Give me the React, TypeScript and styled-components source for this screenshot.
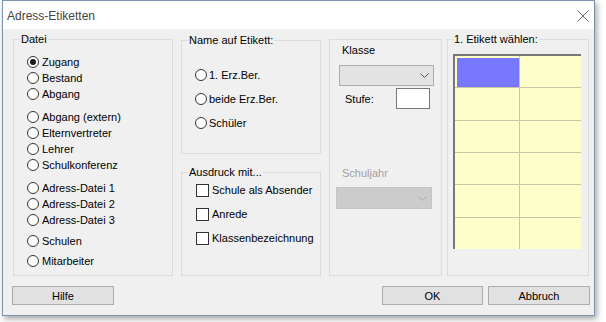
import React from "react";
import styled, { createGlobalStyle } from "styled-components";

const GlobalStyle = createGlobalStyle`
  html, body { margin: 0; padding: 0; background: #ffffff; }
  body {
    font-family: "Liberation Sans", Arial, sans-serif;
    font-size: 11px;
    color: #000;
  }
  * { box-sizing: border-box; }
`;

const Page = styled.div`
  padding: 0 0 0 2px;
  width: 606px;
  height: 322px;
  overflow: hidden;
`;

const Window = styled.div`
  width: 593px;
  border: 1px solid #7d93ad;
  box-shadow: 2px 3px 6px rgba(0, 0, 0, 0.35);
  background: #f0f0f0;
`;

const TitleBar = styled.div`
  height: 28px;
  background: #ffffff;
  display: flex;
  align-items: center;
  justify-content: space-between;
  padding: 0 5px 0 4px;
`;

const Title = styled.span`
  font-size: 12px;
  color: #444444;
  line-height: 14px;
  padding-top: 1px;
`;

const CloseBtn = styled.span`
  display: flex;
  width: 12px;
  height: 12px;
  margin-top: 1px;
`;

const Body = styled.div`
  padding: 10px 5px 10px 10px;
`;

const Columns = styled.div`
  display: flex;
  height: 237px;
`;

const Group = styled.div<{ $w: number; $h?: number; $ml?: number; $mt?: number }>`
  position: relative;
  width: ${(p) => p.$w}px;
  height: ${(p) => (p.$h ? `${p.$h}px` : "auto")};
  margin-left: ${(p) => p.$ml ?? 0}px;
  margin-top: ${(p) => p.$mt ?? 0}px;
  border: 1px solid #dcdcdc;
  flex-shrink: 0;
`;

const Legend = styled.span<{ $left: number }>`
  position: absolute;
  top: -8px;
  left: ${(p) => p.$left}px;
  padding: 0 1px;
  background: #f0f0f0;
  line-height: 14px;
  white-space: nowrap;
`;

const Column = styled.div<{ $w: number; $ml: number }>`
  display: flex;
  flex-direction: column;
  width: ${(p) => p.$w}px;
  margin-left: ${(p) => p.$ml}px;
  flex-shrink: 0;
`;

const OptionList = styled.div<{ $pt: number; $pl: number }>`
  display: flex;
  flex-direction: column;
  padding-top: ${(p) => p.$pt}px;
  padding-left: ${(p) => p.$pl}px;
`;

const OptionRow = styled.label<{ $h: number; $mt?: number; $gap: number }>`
  display: flex;
  align-items: center;
  height: ${(p) => p.$h}px;
  margin-top: ${(p) => p.$mt ?? 0}px;
  gap: ${(p) => p.$gap}px;
  white-space: nowrap;
  line-height: 14px;
`;

const RadioCircle = styled.span<{ $checked?: boolean }>`
  display: flex;
  align-items: center;
  justify-content: center;
  width: 12px;
  height: 12px;
  border: 1px solid #333333;
  border-radius: 50%;
  background: #ffffff;
  flex-shrink: 0;
  &::after {
    content: "";
    display: ${(p) => (p.$checked ? "block" : "none")};
    width: 6px;
    height: 6px;
    border-radius: 50%;
    background: #1a1a1a;
  }
`;

const CheckSquare = styled.span`
  width: 13px;
  height: 13px;
  border: 1px solid #333333;
  background: #ffffff;
  flex-shrink: 0;
`;

const Panel = styled.div`
  width: 113px;
  margin-left: 8px;
  border: 1px solid #dcdcdc;
  padding: 3px 0 0 9px;
  flex-shrink: 0;
  display: flex;
  flex-direction: column;
`;

const FieldLabel = styled.span<{ $disabled?: boolean; $mt?: number }>`
  margin-left: 3px;
  margin-top: ${(p) => p.$mt ?? 0}px;
  line-height: 14px;
  color: ${(p) => (p.$disabled ? "#a0a0a0" : "#000")};
`;

const Select = styled.div<{ $disabled?: boolean; $w: number; $h: number; $mt: number; $ml?: number }>`
  display: flex;
  align-items: center;
  justify-content: flex-end;
  width: ${(p) => p.$w}px;
  height: ${(p) => p.$h}px;
  margin-top: ${(p) => p.$mt}px;
  margin-left: ${(p) => p.$ml ?? 0}px;
  padding-right: 4px;
  background: ${(p) => (p.$disabled ? "#cccccc" : "#e3e3e3")};
  border: 1px solid ${(p) => (p.$disabled ? "#c4c4c4" : "#adadad")};
`;

const StufeRow = styled.div`
  display: flex;
  align-items: center;
  height: 21px;
  margin-top: 2px;
  padding-left: 6px;
`;

const StufeLabel = styled.span`
  width: 51px;
  line-height: 14px;
`;

const TextInput = styled.div`
  width: 34px;
  height: 21px;
  background: #ffffff;
  border: 1px solid #7a7a7a;
`;

const LabelGrid = styled.div`
  display: grid;
  grid-template-columns: 64px 61px;
  grid-template-rows: repeat(6, 1fr);
  gap: 1px;
  width: 128px;
  height: 195px;
  margin: 14px 0 0 5px;
  background: #cac6a6;
  border-left: 2px solid #787878;
  border-top: 2px solid #787878;
`;

const LabelCell = styled.div<{ $selected?: boolean }>`
  background: ${(p) => (p.$selected ? "#7878ff" : "#ffffcc")};
  border-left: ${(p) => (p.$selected ? "2px solid #ffffcc" : "none")};
  border-top: ${(p) => (p.$selected ? "2px solid #ffffcc" : "none")};
`;

const Footer = styled.div`
  display: flex;
  align-items: center;
  margin: 10px -1px 0 -1px;
`;

const Button = styled.button<{ $w: number; $ml?: number }>`
  width: ${(p) => p.$w}px;
  height: 19px;
  margin-left: ${(p) => p.$ml ?? 0}px;
  padding: 0;
  background: #e1e1e1;
  border: 1px solid #adadad;
  font-family: "Liberation Sans", Arial, sans-serif;
  font-size: 11px;
  color: #000;
  line-height: 14px;
`;

const Spacer = styled.div`
  flex: 1;
`;

const Chevron = ({ color }: { color: string }) => (
  <svg width="9" height="5" viewBox="0 0 9 5">
    <polyline points="0.5,0.5 4.5,4.5 8.5,0.5" fill="none" stroke={color} strokeWidth="1" />
  </svg>
);

type Opt = { label: string; mt?: number; checked?: boolean };

const dateiOptions: Opt[] = [
  { label: "Zugang", checked: true },
  { label: "Bestand" },
  { label: "Abgang" },
  { label: "Abgang (extern)", mt: 7 },
  { label: "Elternvertreter" },
  { label: "Lehrer" },
  { label: "Schulkonferenz" },
  { label: "Adress-Datei 1", mt: 7 },
  { label: "Adress-Datei 2" },
  { label: "Adress-Datei 3" },
  { label: "Schulen", mt: 5 },
  { label: "Mitarbeiter", mt: 4 },
];

const nameOptions = ["1. Erz.Ber.", "beide Erz.Ber.", "Schüler"];
const ausdruckOptions = ["Schule als Absender", "Anrede", "Klassenbezeichnung"];

export default function App() {
  const cells = Array.from({ length: 12 }, (_, i) => i);
  return (
    <Page>
      <GlobalStyle />
      <Window>
        <TitleBar>
          <Title>Adress-Etiketten</Title>
          <CloseBtn>
            <svg width="12" height="12" viewBox="0 0 12 12">
              <line x1="0.5" y1="0.5" x2="11.5" y2="11.5" stroke="#666" strokeWidth="1" />
              <line x1="11.5" y1="0.5" x2="0.5" y2="11.5" stroke="#666" strokeWidth="1" />
            </svg>
          </CloseBtn>
        </TitleBar>
        <Body>
          <Columns>
            <Group $w={160}>
              <Legend $left={6}>Datei</Legend>
              <OptionList $pt={14} $pl={13}>
                {dateiOptions.map((o) => (
                  <OptionRow key={o.label} $h={16} $mt={o.mt} $gap={3}>
                    <RadioCircle $checked={o.checked} />
                    <span>{o.label}</span>
                  </OptionRow>
                ))}
              </OptionList>
            </Group>

            <Column $w={140} $ml={8}>
              <Group $w={140} $h={114} $mt={1}>
                <Legend $left={6}>Name auf Etikett:</Legend>
                <OptionList $pt={22} $pl={13}>
                  {nameOptions.map((l) => (
                    <OptionRow key={l} $h={24} $gap={2}>
                      <RadioCircle />
                      <span>{l}</span>
                    </OptionRow>
                  ))}
                </OptionList>
              </Group>
              <Group $w={140} $h={104} $mt={18}>
                <Legend $left={6}>Ausdruck mit...</Legend>
                <OptionList $pt={5} $pl={14}>
                  {ausdruckOptions.map((l) => (
                    <OptionRow key={l} $h={24} $gap={3}>
                      <CheckSquare />
                      <span>{l}</span>
                    </OptionRow>
                  ))}
                </OptionList>
              </Group>
            </Column>

            <Panel>
              <FieldLabel>Klasse</FieldLabel>
              <Select $w={95} $h={21} $mt={8}>
                <Chevron color="#555" />
              </Select>
              <StufeRow>
                <StufeLabel>Stufe:</StufeLabel>
                <TextInput />
              </StufeRow>
              <FieldLabel $disabled $mt={57}>Schuljahr</FieldLabel>
              <Select $disabled $w={96} $h={22} $mt={7} $ml={-3}>
                <Chevron color="#a8a8a8" />
              </Select>
            </Panel>

            <Group $w={142} $ml={5}>
              <Legend $left={5}>1. Etikett wählen:</Legend>
              <LabelGrid>
                {cells.map((i) => (
                  <LabelCell key={i} $selected={i === 0} />
                ))}
              </LabelGrid>
            </Group>
          </Columns>
          <Footer>
            <Button $w={102}>Hilfe</Button>
            <Spacer />
            <Button $w={101}>OK</Button>
            <Button $w={102} $ml={5}>Abbruch</Button>
          </Footer>
        </Body>
      </Window>
    </Page>
  );
}
